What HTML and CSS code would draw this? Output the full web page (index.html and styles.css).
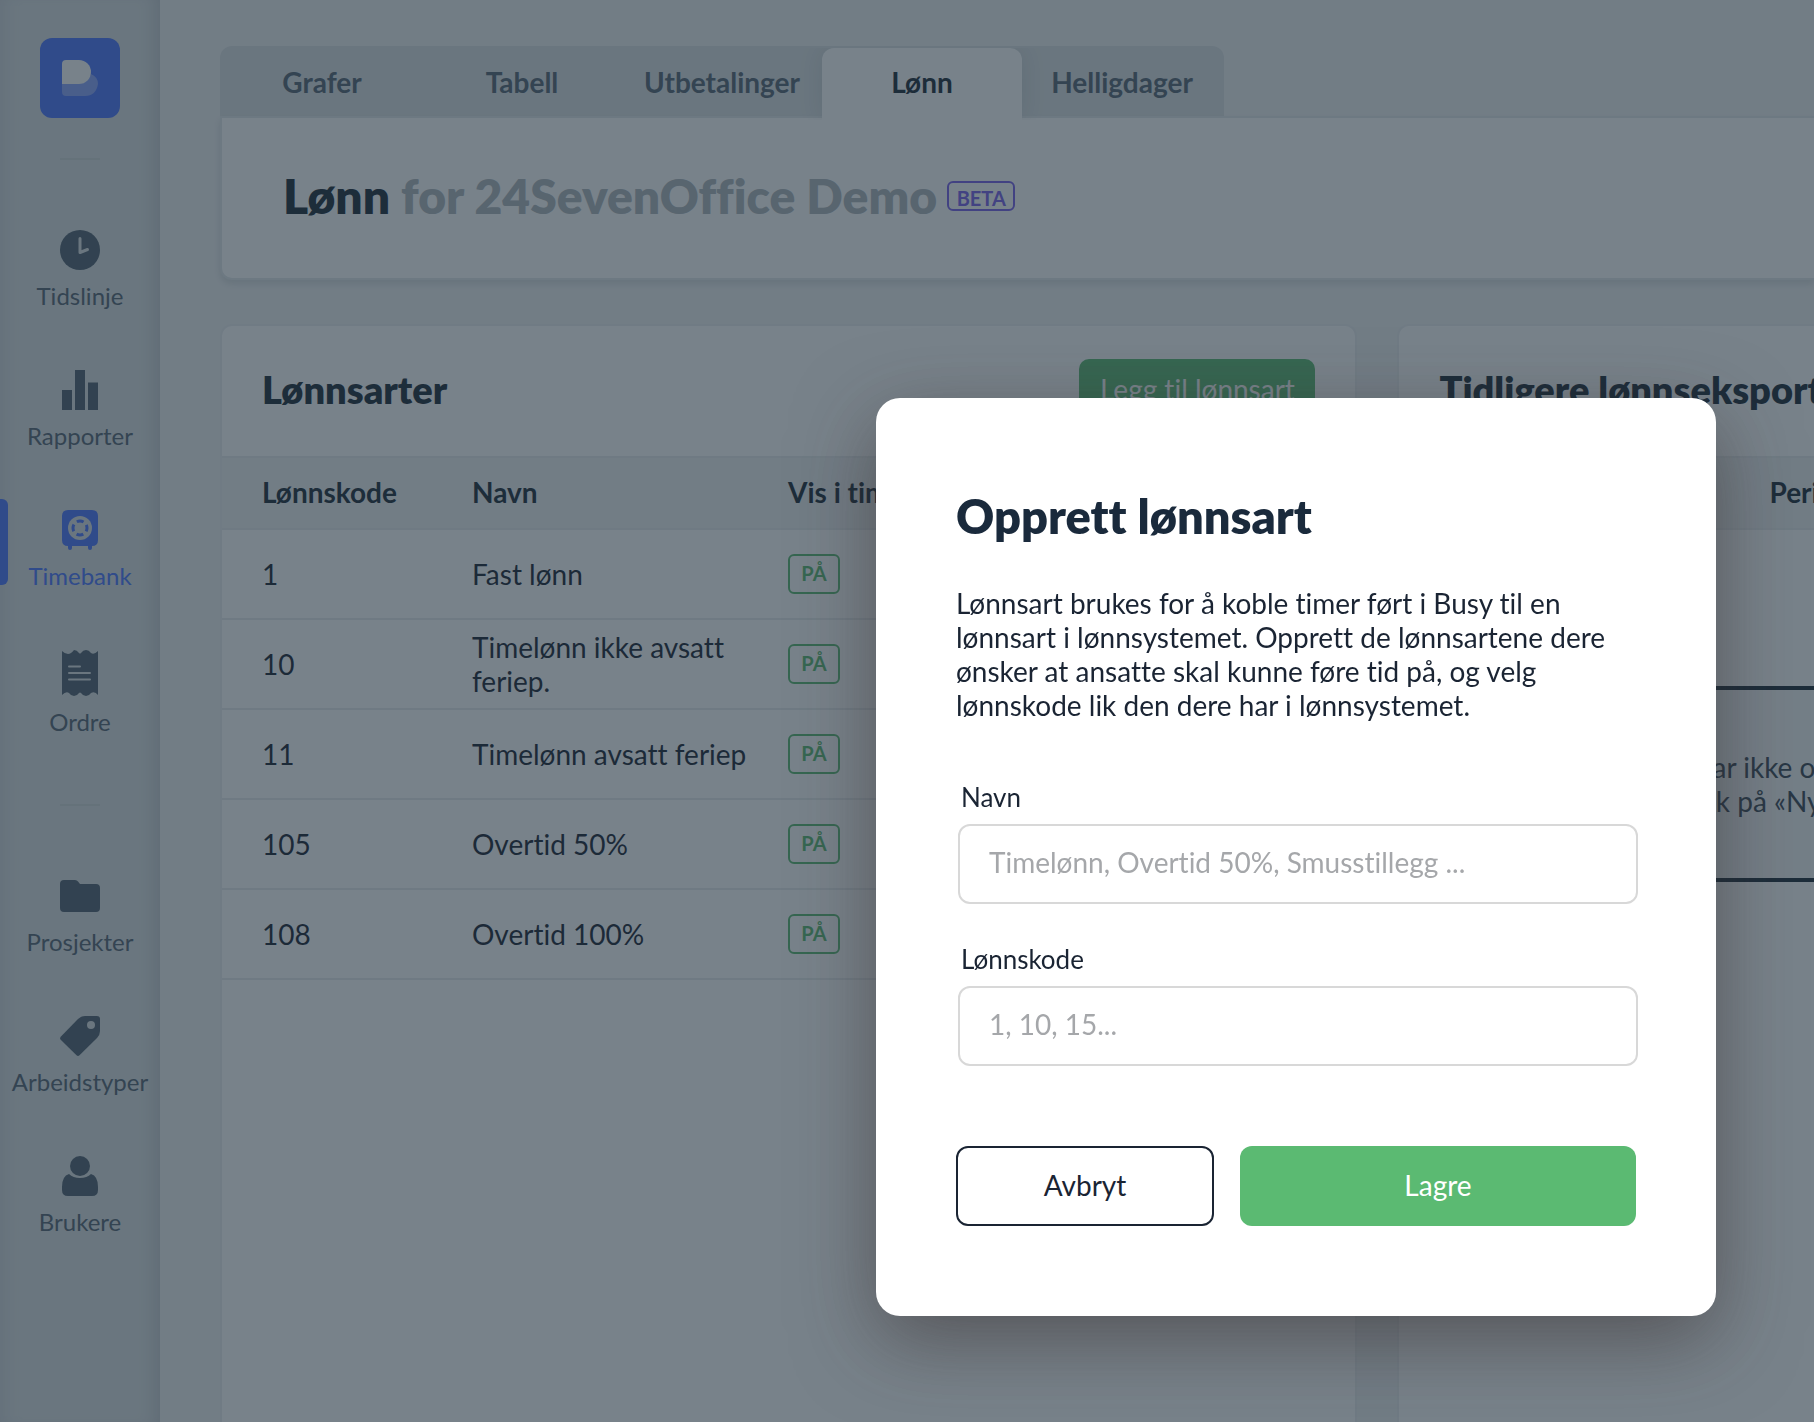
FILE: index.html
```html
<!DOCTYPE html>
<html lang="nb">
<head>
<meta charset="utf-8">
<title>Lønn – Timebank</title>
<link rel="stylesheet" href="styles.css">
</head>
<body>
<div class="app">
  <nav class="sidebar" aria-label="Hovedmeny">
    <a class="logo" href="#" aria-label="Busy">
      <svg width="80" height="80" viewBox="0 0 80 80"><path d="M22 46H39Q48 45 51 36Q58 39 58 46Q56 58 45 58H26Q22 58 22 54Z" fill="#fff" fill-opacity=".35"/><path d="M26 22H39A12 12 0 0 1 39 46H22V26Q22 22 26 22Z" fill="#fff"/></svg>
    </a>
    <hr class="divider divider-first">
    <ul class="nav-list">
      <li><a class="nav-item" href="#"><svg width="40" height="40" viewBox="0 0 40 40"><circle cx="20" cy="20" r="20"/><path class="cut" d="M20 8.500V22.500L27.500 19.500" stroke-width="3"/></svg>Tidslinje</a></li>
      <li><a class="nav-item" href="#"><svg width="40" height="40" viewBox="0 0 40 40"><path d="M2 20H12V40H2ZM15 0H25V40H15ZM28 12.500H38V40H28Z"/></svg>Rapporter</a></li>
      <li><a class="nav-item active" href="#" aria-current="page"><svg width="40" height="40" viewBox="0 0 40 40"><path d="M8 0H32Q38 0 38 6V30Q38 36 32 36V38A2 2 0 0 1 28 38V36H12V38A2 2 0 0 1 8 38V36Q2 36 2 30V6Q2 0 8 0Z"/><circle class="hole" cx="20" cy="18" r="12"/><circle cx="20" cy="18" r="7" fill="none" stroke="#4b75ff" stroke-width="3" stroke-dasharray="7 3.996" stroke-dashoffset="3.500"/></svg>Timebank</a></li>
      <li><a class="nav-item" href="#"><svg width="40" height="46" viewBox="0 0 40 46"><path d="M2 1Q5 4 8 4T14 0Q17 0 19 3Q20 4 21 3Q23 0 26 0Q29 0 31 3Q34 5 38 1V45Q35 41 31 43Q29 46 26 46Q23 46 21 43Q20 42 19 43Q17 46 14 46Q11 46 9 43Q6 41 2 45Z"/><path class="cut" d="M9 16.500H20M9 23H30M9 29.500H30" stroke-width="2"/></svg>Ordre</a></li>
    </ul>
    <hr class="divider">
    <ul class="nav-list">
      <li><a class="nav-item" href="#"><svg width="40" height="40" viewBox="0 0 40 40"><path d="M4 4H15Q17 4 18 5.500L20 8H36Q40 8 40 12V32Q40 36 36 36H4Q0 36 0 32V8Q0 4 4 4Z"/></svg>Prosjekter</a></li>
      <li><a class="nav-item" href="#"><svg width="40" height="40" viewBox="0 0 40 40"><path d="M25 0H37Q40 0 40 3V15Q40 19 37 22L19.500 39.300Q18 40.700 16.500 39.300L.700 23.800Q-.700 22.300 .700 20.800L18 3Q21 0 25 0Z"/><circle class="hole" cx="31" cy="9" r="4"/></svg>Arbeidstyper</a></li>
      <li><a class="nav-item" href="#"><svg width="40" height="40" viewBox="0 0 40 40"><circle cx="20" cy="10" r="10"/><path d="M9 18Q13 22 20 22T31 18Q38 20 38 31V34Q38 40 32 40H8Q2 40 2 34V31Q2 20 9 18Z"/></svg>Brukere</a></li>
    </ul>
  </nav>

  <main class="content">
    <nav class="tabs" aria-label="Timebank">
      <a class="tab" href="#">Grafer</a>
      <a class="tab" href="#">Tabell</a>
      <a class="tab" href="#">Utbetalinger</a>
      <a class="tab selected" href="#" aria-current="page">Lønn</a>
      <a class="tab" href="#">Helligdager</a>
    </nav>
    <header class="page-head">
      <h1>Lønn <span>for 24SevenOffice Demo</span></h1>
      <span class="beta">BETA</span>
    </header>

    <div class="columns">
      <section class="card">
        <div class="card-head">
          <h2>Lønnsarter</h2>
          <button class="add" type="button">Legg til lønnsart</button>
        </div>
        <table>
          <colgroup><col class="col-code"><col class="col-name"><col></colgroup>
          <thead><tr><th>Lønnskode</th><th>Navn</th><th>Vis i timebank</th></tr></thead>
          <tbody>
            <tr><td>1</td><td>Fast lønn</td><td><span class="state">PÅ</span></td></tr>
            <tr><td>10</td><td>Timelønn ikke avsatt feriep.</td><td><span class="state">PÅ</span></td></tr>
            <tr><td>11</td><td>Timelønn avsatt feriep</td><td><span class="state">PÅ</span></td></tr>
            <tr><td>105</td><td>Overtid 50%</td><td><span class="state">PÅ</span></td></tr>
            <tr><td>108</td><td>Overtid 100%</td><td><span class="state">PÅ</span></td></tr>
          </tbody>
        </table>
      </section>
      <section class="card card-last">
        <div class="card-head"><h2>Tidligere lønnseksporter</h2></div>
        <div class="export-head">Periode</div>
        <div class="empty"><p>Dere har ikke opprettet<br>og trykk på «Ny</p></div>
      </section>
    </div>
  </main>
</div>

<div class="overlay">
  <form class="modal" role="dialog" aria-modal="true" aria-labelledby="modal-title">
    <h2 id="modal-title">Opprett lønnsart</h2>
    <p>Lønnsart brukes for å koble timer ført i Busy til en lønnsart i lønnsystemet. Opprett de lønnsartene dere ønsker at ansatte skal kunne føre tid på, og velg lønnskode lik den dere har i lønnsystemet.</p>
    <div class="field">
      <label for="name">Navn</label>
      <input id="name" type="text" placeholder="Timelønn, Overtid 50%, Smusstillegg ...">
    </div>
    <div class="field">
      <label for="code">Lønnskode</label>
      <input id="code" type="text" placeholder="1, 10, 15...">
    </div>
    <div class="actions">
      <button class="cancel" type="button">Avbryt</button>
      <button class="save" type="submit">Lagre</button>
    </div>
  </form>
</div>
</body>
</html>
```
FILE: styles.css
```css
* { box-sizing: border-box; }

body {
  margin: 0;
  height: 100vh;
  overflow: hidden;
  background: #f0f2f3;
  color: #1a2433;
  font: 28px/34px Lato, "Liberation Sans", sans-serif;
  font-variant-ligatures: none;
}

h1, h2, p, ul { margin: 0; padding: 0; }
a { color: inherit; text-decoration: none; }
button, input { font: inherit; font-variant-ligatures: none; }

.app { display: flex; min-height: 100vh; }

/* Sidebar */
.sidebar {
  flex: none;
  width: 160px;
  padding-top: 38px;
  background: #dce1e3;
  box-shadow: inset -16px 0 16px -10px #c3c8cd, inset 16px 0 16px -12px #cdd2d7;
}
.logo {
  display: block;
  width: 80px;
  height: 80px;
  margin: 0 auto;
  border-radius: 12px;
  background: #4b75ff;
}
.logo svg { display: block; }
.divider {
  width: 40px;
  height: 2px;
  margin: 68px auto 70px;
  border: 0;
  background: #d0d6d8;
}
.divider-first { margin-top: 40px; }
.nav-list {
  display: flex;
  flex-direction: column;
  gap: 60px;
  list-style: none;
}
.nav-item {
  position: relative;
  display: flex;
  flex-direction: column;
  align-items: center;
  gap: 12px;
  color: #556473;
  font-size: 24px;
  line-height: 28px;
}
.nav-item svg { fill: #506070; overflow: visible; }
.nav-item .cut { fill: none; stroke: #dce1e3; stroke-linecap: round; stroke-linejoin: round; }
.nav-item .hole { fill: #dce1e3; }
.nav-item.active { color: #4b75ff; }
.nav-item.active svg { fill: #4b75ff; }
.nav-item.active::before {
  content: "";
  position: absolute;
  left: 0;
  top: -11px;
  width: 8px;
  height: 86px;
  border-radius: 0 6px 6px 0;
  background: #4b75ff;
}

/* Page */
.content { flex: 1; min-width: 0; display: flex; flex-direction: column; padding: 46px 0 0 60px; }
.tabs {
  align-self: flex-start;
  display: flex;
  height: 70px;
  padding: 2px 2px 0;
  border-radius: 12px 12px 0 0;
  background: #dce1e3;
}
.tab {
  width: 200px;
  color: #556473;
  font-weight: 700;
  line-height: 68px;
  text-align: center;
}
.tab.selected {
  position: relative;
  height: 72px;
  border-radius: 12px 12px 0 0;
  background: #fff;
  color: #1c2b38;
  box-shadow: 0 0 24px rgba(30, 47, 60, .12);
  clip-path: inset(0 -24px 0 -24px);
}
.page-head {
  display: flex;
  align-items: center;
  gap: 10px;
  height: 164px;
  padding: 0 0 4px 61px;
  border: 2px solid #e4e8ea;
  border-width: 2px 0 2px 2px;
  border-radius: 0 0 0 12px;
  background: #fff;
  box-shadow: 0 4px 6px rgba(30, 47, 60, .12);
}
h1, h2 { font-weight: 800; }
h1 { color: #1c2b38; font-size: 48px; line-height: 60px; white-space: nowrap; }
h1 span { color: #b0b6bc; }
.beta {
  width: 68px;
  height: 30px;
  border: 2px solid #7860eb;
  border-radius: 6px;
  color: #7860eb;
  font-size: 20px;
  font-weight: 700;
  line-height: 30px;
  text-align: center;
}

.columns {
  flex: 1;
  display: grid;
  grid-template-columns: minmax(0, 71fr) minmax(0, 26fr);
  gap: 40px;
  margin-top: 44px;
}
.card {
  border: 2px solid #ebeef0;
  border-bottom: 0;
  border-radius: 12px 12px 0 0;
  background: #fff;
  overflow: hidden;
}
.card-last { border-right: 0; border-radius: 12px 0 0; }
.card-head {
  display: flex;
  justify-content: space-between;
  align-items: center;
  height: 130px;
  padding: 0 40px 4px;
}
.card-head h2 { color: #1c2b38; font-size: 38px; line-height: 44px; white-space: nowrap; }
.add {
  width: 236px;
  height: 60px;
  padding: 0;
  border: 0;
  border-radius: 10px;
  background: #5bba72;
  color: #fff;
  white-space: nowrap;
}

table { width: 100%; border-collapse: collapse; table-layout: fixed; }
.col-code { width: 250px; }
.col-name { width: 316px; }
th, td { padding: 0; text-align: left; }
th:first-child, td:first-child { padding-left: 40px; }
th { height: 72px; padding-bottom: 2px; font-weight: 700; color: #1c2b38; }
thead tr, .export-head {
  border-top: 2px solid #e9ecee;
  border-bottom: 2px solid #e9ecee;
  background: #f0f2f3;
}
td { height: 90px; border-bottom: 2px solid #e9ecee; }
td:nth-child(2) { padding-right: 30px; }
.state {
  display: block;
  width: 52px;
  height: 40px;
  border: 2px solid #5bba72;
  border-radius: 6px;
  color: #5bba72;
  font-size: 20px;
  font-weight: 700;
  line-height: 34px;
  text-align: center;
}

.export-head {
  height: 74px;
  padding-left: 370px;
  color: #1c2b38;
  font-weight: 700;
  line-height: 68px;
}
.empty {
  margin-top: 156px;
  padding: 60px 0 60px 230px;
  border: 4px solid #1c2b38;
  border-width: 4px 0;
  background: #f6f7f8;
  color: #3a4654;
  white-space: nowrap;
}

/* Dialog */
.overlay {
  position: fixed;
  inset: 0;
  display: flex;
  justify-content: flex-end;
  align-items: flex-start;
  padding: 398px 98px 0 0;
  background: rgba(30, 47, 60, .6);
}
.modal {
  width: 840px;
  padding: 88px 80px 90px;
  border-radius: 24px;
  background: #fff;
  box-shadow: 0 24px 80px rgba(50, 40, 40, .5);
}
.modal h2 { font-size: 47px; line-height: 60px; color: #1a2a3c; }
.modal p { margin: 40px 0 58px; }
.field { margin: 0 -2px 38px 2px; }
.field label { display: block; margin: 0 3px 10px; font-size: 26px; }
.field input {
  display: block;
  width: 100%;
  height: 80px;
  padding: 0 29px 4px;
  border: 2px solid #d8d8d8;
  border-radius: 12px;
  background: #fff;
  color: inherit;
}
.field input::placeholder { color: #a5a7aa; opacity: 1; }
.actions { display: flex; gap: 26px; margin-top: 80px; }
.actions button { height: 80px; padding-bottom: 4px; border-radius: 12px; }
.cancel { width: 258px; border: 2px solid #1a2433; background: #fff; color: #1a2433; }
.save { flex: 1; border: 0; background: #5bba72; color: #fff; }
```
